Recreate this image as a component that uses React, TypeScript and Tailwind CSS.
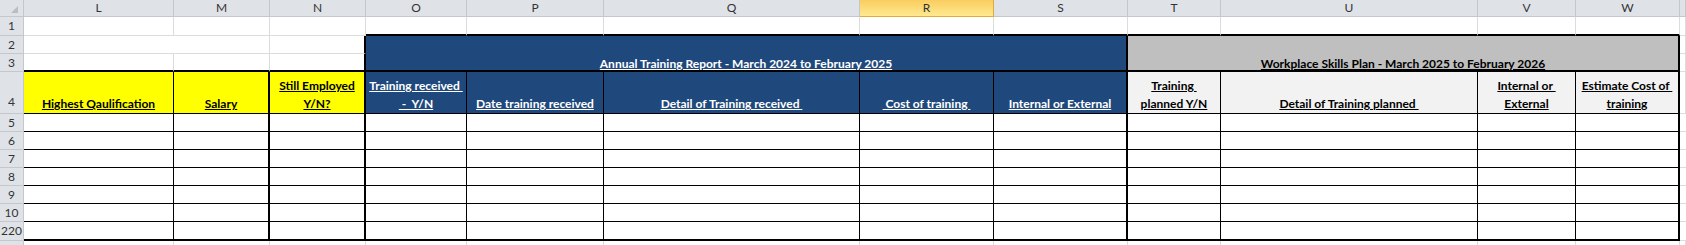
import React from "react";

// Excel-style sheet: Annual Training Report / Workplace Skills Plan

const letters = ["L", "M", "N", "O", "P", "Q", "R", "S", "T", "U", "V", "W"];
const bodyRows = ["5", "6", "7", "8", "9", "10", "220"];

const hdr =
  "flex items-center justify-center bg-[#dfe3e8] border-r border-b border-[#c3c8ce] text-[12px] text-[#333]";
const grid = "border-r border-b border-[#dadcdd] bg-white";

const BodyRow = ({ n, last }: { n: string; last: boolean }) => {
  const b = last ? "border-b-2" : "border-b";
  return (
    <>
      <div className={hdr}>{n}</div>
      <div className={`bg-white border-r border-black ${b} border-b-black`} />
      <div className={`bg-white border-r-2 border-black ${b} border-b-black`} />
      <div className={`bg-white border-r-2 border-black ${b} border-b-black`} />
      <div className={`bg-white border-r border-black ${b} border-b-black`} />
      <div className={`bg-white border-r border-black ${b} border-b-black`} />
      <div className={`bg-white border-r border-black ${b} border-b-black`} />
      <div className={`bg-white border-r border-black ${b} border-b-black`} />
      <div className={`bg-white border-r-2 border-black ${b} border-b-black`} />
      <div className={`bg-white border-r border-black ${b} border-b-black`} />
      <div className={`bg-white border-r border-black ${b} border-b-black`} />
      <div className={`bg-white border-r border-black ${b} border-b-black`} />
      <div className={`bg-white border-r-2 border-black ${b} border-b-black`} />
      <div className="bg-white border-b border-[#dadcdd]" />
    </>
  );
};

const head = "flex items-end justify-center text-center font-bold underline leading-[18px] whitespace-pre";

export default function App() {
  return (
    <div className="w-[1686px] h-[245px] overflow-hidden bg-white font-[Lato,'Liberation_Sans',sans-serif] text-[12px]">
      <div className="grid grid-cols-[24px_150px_96px_96px_101px_137px_256px_134px_134px_93px_257px_98px_104px_1fr] grid-rows-[17px_19px_18px_18px_42px_18px_18px_18px_18px_18px_18px_19px_20px]">
        {/* column headers */}
        <div className={`${hdr} relative`}>
          <svg className="absolute right-[5px] bottom-[3px]" width="7" height="7" viewBox="0 0 7 7">
            <path d="M7 0 L7 7 L0 7 Z" fill="#b9bec4" />
          </svg>
        </div>
        {letters.map((l) =>
          l === "R" ? (
            <div
              key={l}
              className="flex items-center justify-center bg-gradient-to-b from-[#f9cd5f] to-[#ffe98f] border-r border-b border-[#e3a93c] text-[12px] text-[#333]"
            >
              {l}
            </div>
          ) : (
            <div key={l} className={hdr}>
              {l}
            </div>
          )
        )}
        <div className={hdr} />

        {/* row 1 */}
        <div className={hdr}>1</div>
        <div className={grid} />
        <div className={grid} />
        <div className={grid} />
        <div className="bg-white border-r border-r-[#dadcdd] border-b-2 border-b-black" />
        <div className="bg-white border-r border-r-[#dadcdd] border-b-2 border-b-black" />
        <div className="bg-white border-r border-r-[#dadcdd] border-b-2 border-b-black" />
        <div className="bg-white border-r border-r-[#dadcdd] border-b-2 border-b-black" />
        <div className="bg-white border-r border-r-[#dadcdd] border-b-2 border-b-black" />
        <div className="bg-white border-r border-r-[#dadcdd] border-b-2 border-b-black" />
        <div className="bg-white border-r border-r-[#dadcdd] border-b-2 border-b-black" />
        <div className="bg-white border-r border-r-[#dadcdd] border-b-2 border-b-black" />
        <div className="bg-white border-r border-r-[#dadcdd] border-b-2 border-b-black" />
        <div className={grid} />

        {/* row 2 */}
        <div className={hdr}>2</div>
        <div className={`${grid} col-span-2`} />
        <div className="bg-white border-b border-b-[#dadcdd] border-r-2 border-r-black" />
        <div className="col-span-5 row-span-2 bg-[#1f497d] border-r-2 border-b-2 border-black flex items-end justify-center text-white font-bold underline leading-[12px]">
          Annual Training Report - March 2024 to February 2025
        </div>
        <div className="col-span-4 row-span-2 bg-[#bfbfbf] border-r-2 border-b-2 border-black flex items-end justify-center text-black font-bold underline leading-[12px]">
          Workplace Skills Plan - March 2025 to February 2026
        </div>
        <div className={grid} />

        {/* row 3 */}
        <div className={hdr}>3</div>
        <div className="bg-white border-r border-r-[#dadcdd] border-b-2 border-b-black" />
        <div className="bg-white border-r border-r-[#dadcdd] border-b-2 border-b-black" />
        <div className="bg-white border-r-2 border-b-2 border-black" />
        <div className={grid} />

        {/* row 4 */}
        <div className={`${hdr} items-end pb-[2px]`}>4</div>
        <div className={`${head} bg-[#ffff00] text-black border-r border-b border-black`}>Highest Qaulification</div>
        <div className={`${head} bg-[#ffff00] text-black border-r-2 border-b border-black`}>Salary</div>
        <div className={`${head} bg-[#ffff00] text-black border-r-2 border-b border-black`}>
          {"Still Employed\nY/N?"}
        </div>
        <div className={`${head} bg-[#1f497d] text-white border-r border-b border-black`}>
          {"Training received \n -  Y/N"}
        </div>
        <div className={`${head} bg-[#1f497d] text-white border-r border-b border-black`}>Date training received</div>
        <div className={`${head} bg-[#1f497d] text-white border-r border-b border-black`}>Detail of Training received </div>
        <div className={`${head} bg-[#1f497d] text-white border-r border-b border-black`}> Cost of training </div>
        <div className={`${head} bg-[#1f497d] text-white border-r-2 border-b border-black`}>Internal or External</div>
        <div className={`${head} bg-[#f2f2f2] text-black border-r border-b border-black`}>
          {"Training \nplanned Y/N"}
        </div>
        <div className={`${head} bg-[#f2f2f2] text-black border-r border-b border-black`}>Detail of Training planned </div>
        <div className={`${head} bg-[#f2f2f2] text-black border-r border-b border-black`}>
          {"Internal or \nExternal"}
        </div>
        <div className={`${head} bg-[#f2f2f2] text-black border-r-2 border-b border-black`}>
          {"Estimate Cost of \ntraining"}
        </div>
        <div className={grid} />

        {bodyRows.map((n, i) => (
          <BodyRow key={n} n={n} last={i === bodyRows.length - 1} />
        ))}

        {/* partial row below */}
        <div className={hdr} />
        {letters.map((l) => (
          <div key={l} className={grid} />
        ))}
        <div className={grid} />
      </div>
    </div>
  );
}
